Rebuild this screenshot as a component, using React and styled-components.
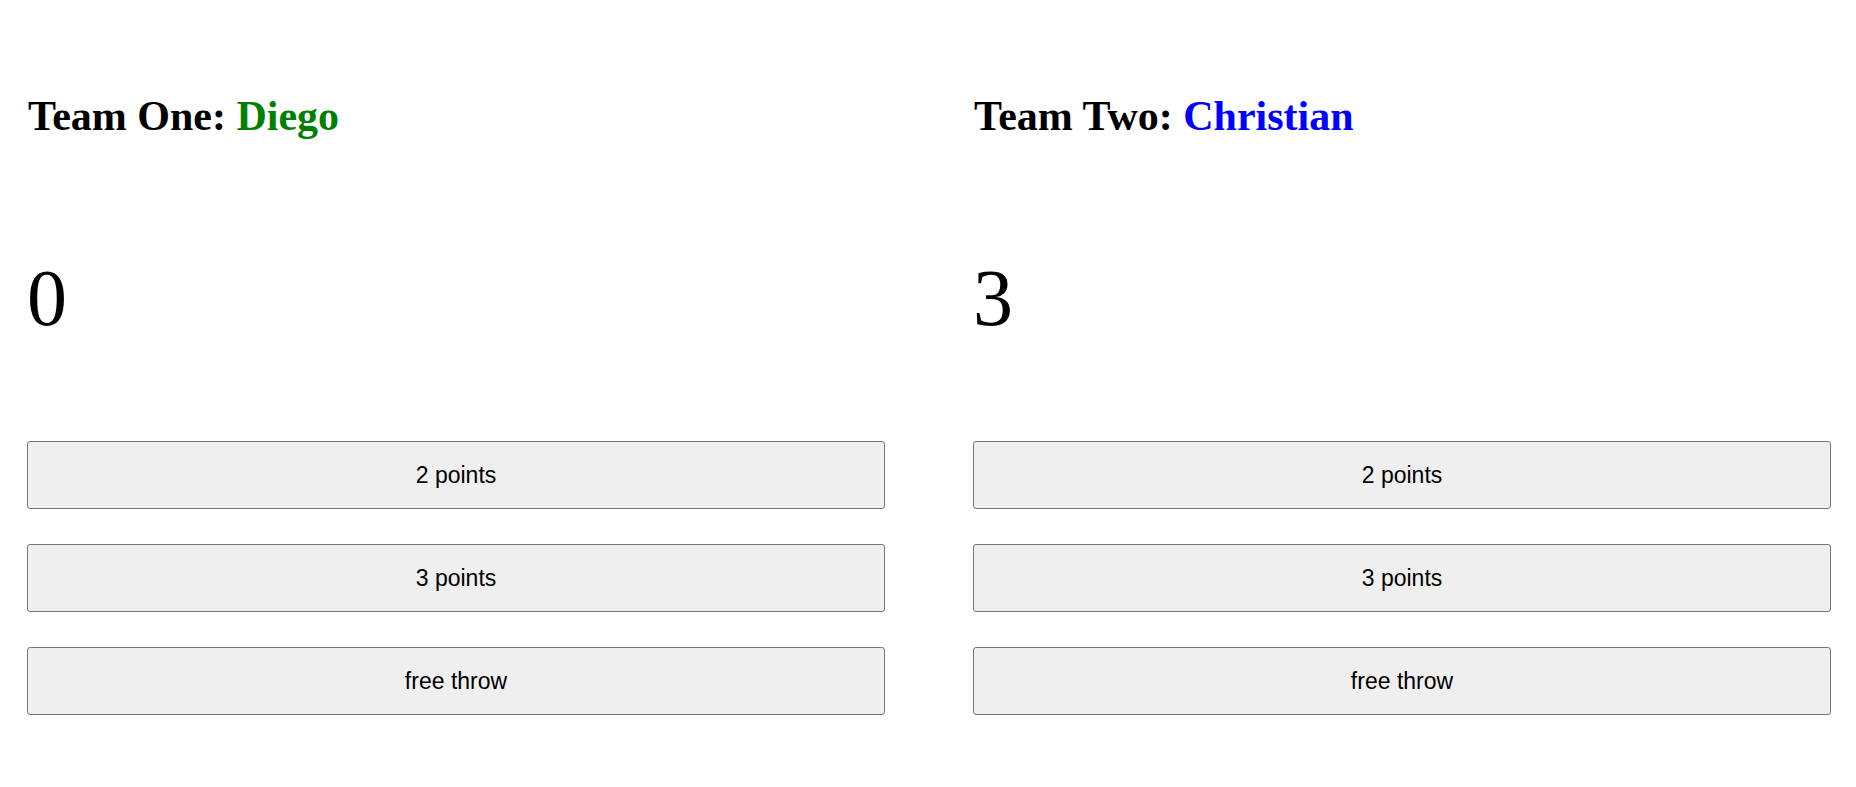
import React, { useState } from "react";
import styled, { createGlobalStyle } from "styled-components";

const GlobalStyle = createGlobalStyle`
  html, body {
    margin: 0;
    padding: 0;
    background: #ffffff;
  }
  body {
    font-family: "Liberation Serif", "Times New Roman", serif;
  }
`;

const App = () => {
  const [scores, setScores] = useState({ one: 0, two: 3 });

  const addPoints = (team, amount) => {
    setScores((prev) => ({ ...prev, [team]: prev[team] + amount }));
  };

  const teams = [
    { key: "one", label: "Team One:", player: "Diego", color: "#008000" },
    { key: "two", label: "Team Two:", player: "Christian", color: "#0000ff" },
  ];

  return (
    <>
      <GlobalStyle />
      <Board>
        {teams.map((team) => (
          <TeamColumn key={team.key}>
            <TeamTitle>
              {team.label} <Player color={team.color}>{team.player}</Player>
            </TeamTitle>
            <Score>{scores[team.key]}</Score>
            <ButtonList>
              <ScoreBtn onClick={() => addPoints(team.key, 2)}>2 points</ScoreBtn>
              <ScoreBtn onClick={() => addPoints(team.key, 3)}>3 points</ScoreBtn>
              <ScoreBtn onClick={() => addPoints(team.key, 1)}>free throw</ScoreBtn>
            </ButtonList>
          </TeamColumn>
        ))}
      </Board>
    </>
  );
};

const Board = styled.div`
  display: grid;
  grid-template-columns: 858px 858px;
  column-gap: 88px;
  padding-left: 27px;
`;

const TeamColumn = styled.div`
  display: flex;
  flex-direction: column;
`;

const TeamTitle = styled.h1`
  margin: 92px 0 0 1px;
  font-size: 42px;
  line-height: 48px;
  font-weight: 700;
  color: #000000;
`;

const Player = styled.span`
  color: ${(props) => props.color};
`;

const Score = styled.div`
  margin-top: 112px;
  font-size: 80px;
  line-height: 92px;
  color: #000000;
`;

const ButtonList = styled.div`
  display: flex;
  flex-direction: column;
  gap: 35px;
  margin-top: 97px;
`;

const ScoreBtn = styled.button`
  height: 68px;
  width: 100%;
  background-color: #efefef;
  border: 1px solid #767676;
  border-radius: 3px;
  font-family: "Liberation Sans", Arial, sans-serif;
  font-size: 23px;
  color: #000000;
  cursor: pointer;
`;

export default App;
